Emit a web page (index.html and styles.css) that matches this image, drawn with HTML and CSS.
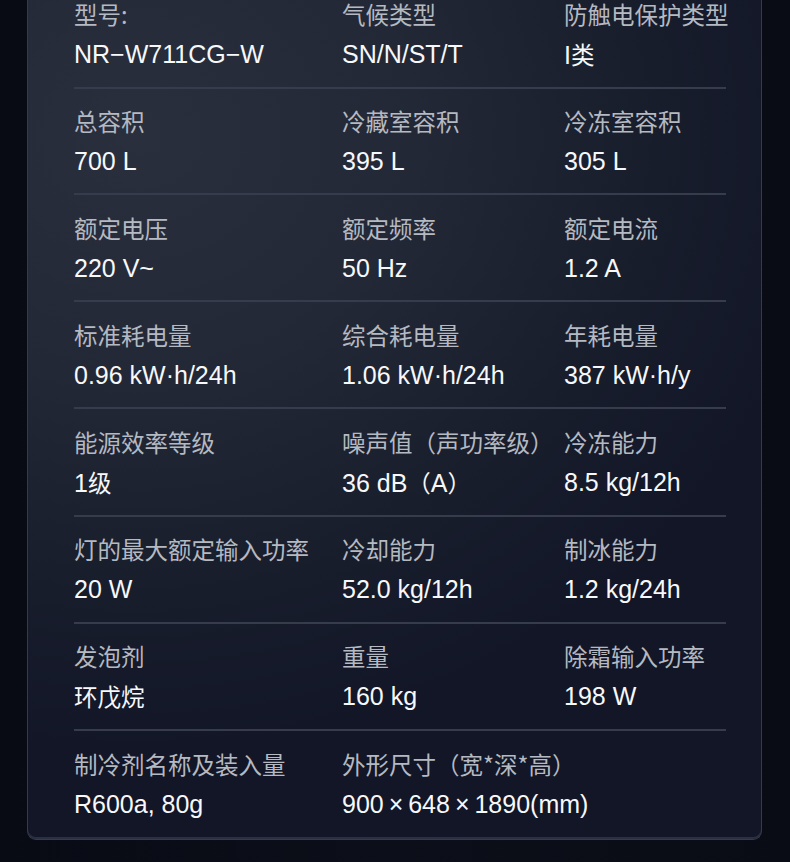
FILE: index.html
```html
<!DOCTYPE html>
<html lang="zh-CN">
<head>
<meta charset="utf-8">
<title>规格参数</title>
<link rel="stylesheet" href="styles.css">
</head>
<body>
<main class="page">
  <section class="card">
    <div class="row">
      <div class="cell"><div class="label">型号:</div><div class="value">NR−W711CG−W</div></div>
      <div class="cell"><div class="label">气候类型</div><div class="value">SN/N/ST/T</div></div>
      <div class="cell"><div class="label">防触电保护类型</div><div class="value">I<span class="cjk">类</span></div></div>
    </div>
    <div class="row">
      <div class="cell"><div class="label">总容积</div><div class="value">700 L</div></div>
      <div class="cell"><div class="label">冷藏室容积</div><div class="value">395 L</div></div>
      <div class="cell"><div class="label">冷冻室容积</div><div class="value">305 L</div></div>
    </div>
    <div class="row">
      <div class="cell"><div class="label">额定电压</div><div class="value">220 V~</div></div>
      <div class="cell"><div class="label">额定频率</div><div class="value">50 Hz</div></div>
      <div class="cell"><div class="label">额定电流</div><div class="value">1.2 A</div></div>
    </div>
    <div class="row">
      <div class="cell"><div class="label">标准耗电量</div><div class="value">0.96 kW·h/24h</div></div>
      <div class="cell"><div class="label">综合耗电量</div><div class="value">1.06 kW·h/24h</div></div>
      <div class="cell"><div class="label">年耗电量</div><div class="value">387 kW·h/y</div></div>
    </div>
    <div class="row">
      <div class="cell"><div class="label">能源效率等级</div><div class="value">1<span class="cjk">级</span></div></div>
      <div class="cell"><div class="label">噪声值（声功率级）</div><div class="value">36 dB<span class="cjk">（</span>A<span class="cjk">）</span></div></div>
      <div class="cell"><div class="label">冷冻能力</div><div class="value">8.5 kg/12h</div></div>
    </div>
    <div class="row">
      <div class="cell"><div class="label">灯的最大额定输入功率</div><div class="value">20 W</div></div>
      <div class="cell"><div class="label">冷却能力</div><div class="value">52.0 kg/12h</div></div>
      <div class="cell"><div class="label">制冰能力</div><div class="value">1.2 kg/24h</div></div>
    </div>
    <div class="row">
      <div class="cell"><div class="label">发泡剂</div><div class="value"><span class="cjk">环戊烷</span></div></div>
      <div class="cell"><div class="label">重量</div><div class="value">160 kg</div></div>
      <div class="cell"><div class="label">除霜输入功率</div><div class="value">198 W</div></div>
    </div>
    <div class="row last">
      <div class="cell"><div class="label">制冷剂名称及装入量</div><div class="value">R600a, 80g</div></div>
      <div class="cell wide"><div class="label">外形尺寸（宽*深*高）</div><div class="value">900<span class="thin"> × </span>648<span class="thin"> × </span>1890(mm)</div></div>
    </div>
  </section>
</main>
</body>
</html>
```
FILE: styles.css
```css
html, body {
  margin: 0;
  padding: 0;
  height: 100%;
}
body {
  background: linear-gradient(90deg, #080b14 0%, #0c0f19 50%, #090c14 100%);
  font-family: "Noto Sans CJK SC", "Noto Sans", sans-serif;
  overflow: hidden;
}
.page {
  padding: 0 28px 0 27px;
}
.card {
  margin-top: -40px;
  padding: 20.75px 35px 19px 46px;
  border: 1px solid #353b4b;
  border-top: none;
  border-radius: 0 0 9px 9px;
  background: radial-gradient(ellipse 95% 70% at 15% 20%, #2a2f3e 0%, #232837 40%, #181d2c 75%, #121627 100%);
  box-shadow: inset 0 -2px 0 #2a3042;
}
.row {
  display: grid;
  grid-template-columns: 268px 222px 1fr;
  padding: 18.75px 0 16.05px;
  border-bottom: 2px solid #363c4b;
}
.row.last {
  border-bottom: none;
  padding-bottom: 0;
}
.cell {
  display: flex;
  flex-direction: column;
  gap: 10px;
  white-space: nowrap;
}
.cell.wide {
  grid-column: span 2;
}
.label {
  font-size: 23.5px;
  line-height: 28px;
  color: #b5b9c1;
}
.value {
  font-family: "Liberation Sans", "Noto Sans CJK SC", sans-serif;
  font-size: 25px;
  line-height: 32px;
  color: #f7f8fa;
}
.value .cjk {
  font-family: "Noto Sans CJK SC", sans-serif;
  font-size: 23.5px;
}
.value .thin {
  word-spacing: -2px;
}
```
